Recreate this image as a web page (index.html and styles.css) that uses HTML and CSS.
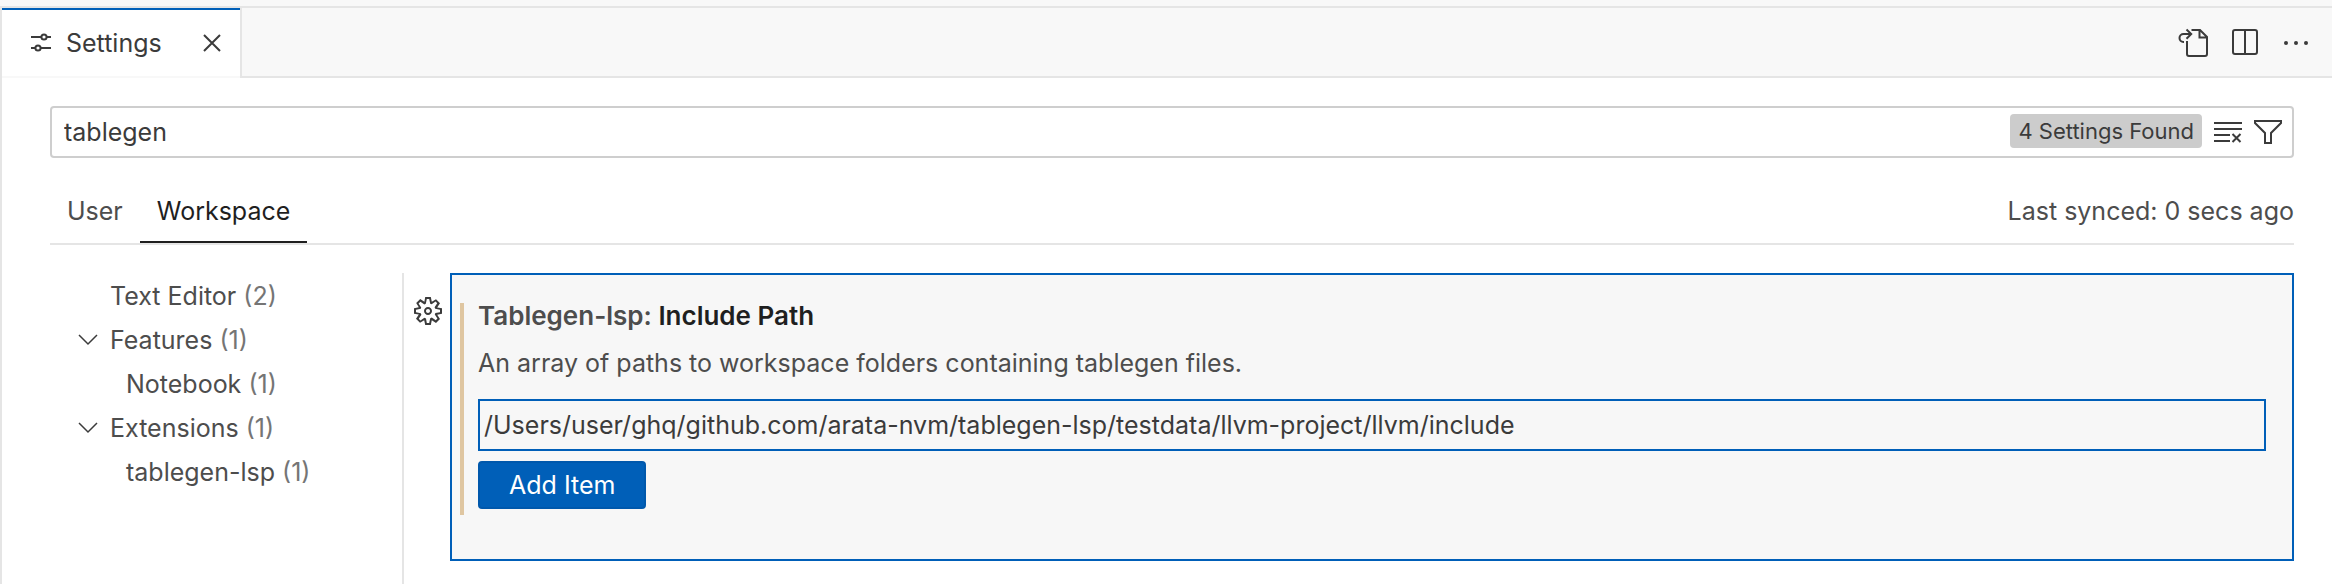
FILE: index.html
```html
<!DOCTYPE html>
<html lang="en">
<head>
<meta charset="utf-8">
<title>Settings</title>
<link rel="stylesheet" href="styles.css">
</head>
<body>
<div class="editor">
  <header class="tabbar">
    <div class="tab">
      <svg class="icon icon-sliders" viewBox="0 0 20 20"><path d="M0 4h10M16 4h4M0 15h4M10 15h10"/><circle cx="13" cy="4" r="2.6"/><circle cx="7" cy="15" r="2.6"/></svg>
      <span class="tab-label">Settings</span>
      <button class="icon-button tab-close" type="button" aria-label="Close"><svg class="icon icon-close" viewBox="0 0 18 18"><path d="M1 1l16 16M17 1L1 17"/></svg></button>
    </div>
    <div class="actions">
      <button class="icon-button" type="button" aria-label="Open Settings (JSON)"><svg class="icon" viewBox="0 0 32 32"><path d="M11 14v13q0 2 2 2h16q2 0 2-2V10l-7-7h-8.500M23.500 3v7.500H31"/><path d="M8 15H7.500a4 4 0 0 1 0-8H15M10.500 2.500L15.200 7l-4.700 4.700"/></svg></button>
      <button class="icon-button" type="button" aria-label="Split Editor"><svg class="icon" viewBox="0 0 32 32"><rect x="5" y="3" width="24" height="24" rx="2"/><path d="M17 3v24"/></svg></button>
      <button class="icon-button" type="button" aria-label="More Actions"><svg class="icon icon-solid" viewBox="0 0 32 32"><circle cx="6" cy="16" r="2"/><circle cx="16" cy="16" r="2"/><circle cx="26" cy="16" r="2"/></svg></button>
    </div>
  </header>
  <main class="settings">
    <div class="search">
      <input class="search-input" type="text" value="tablegen" aria-label="Search settings">
      <span class="badge">4 Settings Found</span>
      <div class="search-actions">
        <button class="icon-button" type="button" aria-label="Clear Search Results"><svg class="icon" viewBox="0 0 32 32"><path d="M2 7h28M2 13h28M2 19h16M2 25h16M20.500 18l8 8M28.500 18l-8 8"/></svg></button>
        <button class="icon-button" type="button" aria-label="Filter Settings"><svg class="icon" viewBox="0 0 32 32"><path d="M3 5h26v2L19 17v10h-6V17L3 7z"/></svg></button>
      </div>
    </div>
    <div class="scopes">
      <button class="scope" type="button">User</button>
      <button class="scope scope-active" type="button">Workspace</button>
      <span class="sync">Last synced: 0 secs ago</span>
    </div>
    <div class="body">
      <nav class="toc" aria-label="Settings groups">
        <div class="toc-row"><span>Text Editor <span class="count">(2)</span></span></div>
        <div class="toc-row"><svg class="icon icon-chevron" viewBox="0 0 20 12"><path d="M1 1l9 9 9-9"/></svg><span>Features <span class="count">(1)</span></span></div>
        <div class="toc-row toc-child"><span>Notebook <span class="count">(1)</span></span></div>
        <div class="toc-row"><svg class="icon icon-chevron" viewBox="0 0 20 12"><path d="M1 1l9 9 9-9"/></svg><span>Extensions <span class="count">(1)</span></span></div>
        <div class="toc-row toc-child"><span>tablegen-lsp <span class="count">(1)</span></span></div>
      </nav>
      <div class="gutter">
        <button class="icon-button" type="button" aria-label="More setting actions"><svg class="icon icon-solid" viewBox="0 0 16 16"><path fill-rule="evenodd" d="M9.1 4.4L8.6 2H7.4l-.5 2.4-.7.3-2-1.3-.9.8 1.3 2-.2.7-2.4.5v1.2l2.4.5.3.8-1.3 2 .8.8 2-1.3.8.3.4 2.3h1.2l.5-2.4.8-.3 2 1.3.8-.8-1.3-2 .3-.8 2.3-.4V7.4l-2.4-.5-.3-.8 1.3-2-.8-.8-2 1.3-.7-.2zM9.400 1l.5 2.400L12 2.100l2 2-1.400 2.100 2.400.4v2.800l-2.400.5L14 12l-2 2-2.100-1.400-.5 2.400H6.600l-.5-2.400L4 13.900l-2-2 1.400-2.100L1 9.400V6.600l2.400-.5L2.100 4l2-2 2.100 1.400.4-2.400h2.800zm.6 7c0 1.100-.9 2-2 2s-2-.9-2-2 .9-2 2-2 2 .9 2 2zM8 9c.6 0 1-.4 1-1s-.4-1-1-1-1 .4-1 1 .4 1 1 1z"/></svg></button>
      </div>
      <section class="setting">
        <div class="setting-content">
          <h2 class="setting-title"><span class="setting-group">Tablegen-lsp:</span> Include Path</h2>
          <p class="setting-text">An array of paths to workspace folders containing tablegen files.</p>
          <ul class="paths">
            <li class="path">/Users/user/ghq/github.com/arata-nvm/tablegen-lsp/testdata/llvm-project/llvm/include</li>
          </ul>
          <button class="add" type="button">Add Item</button>
        </div>
      </section>
    </div>
  </main>
</div>
</body>
</html>
```
FILE: styles.css
```css
* {
  box-sizing: border-box;
}

body {
  margin: 0;
  padding-top: 6px;
  background: #f8f8f8;
  color: #3b3b3b;
  font-family: Inter, "Liberation Sans", sans-serif;
  font-size: 25px;
  line-height: 32px;
}

button,
input {
  margin: 0;
  padding: 0;
  border: 0;
  background: none;
  color: inherit;
  font: inherit;
}

.editor {
  display: flex;
  flex-direction: column;
  min-height: calc(100vh - 6px);
  border-top: 2px solid #e5e5e5;
  border-left: 2px solid #e5e5e5;
  background: #fff;
}

.icon {
  display: block;
  width: 32px;
  height: 32px;
  fill: none;
  stroke: #3b3b3b;
  stroke-width: 2;
}

.icon-solid {
  fill: #3b3b3b;
  stroke: none;
}

.icon-button {
  display: block;
  flex: none;
}

.tabbar {
  display: flex;
  justify-content: space-between;
  height: 70px;
  background: #f8f8f8;
  box-shadow: inset 0 -2px #e5e5e5;
}

.tab {
  display: flex;
  align-items: center;
  padding: 0 19px 0 29px;
  border-top: 2px solid #005fb8;
  border-bottom: 2px solid #f8f8f8;
  background: #fff;
  box-shadow: 2px 0 #e5e5e5;
}

.icon-sliders {
  width: 20px;
  height: 20px;
}

.tab-label {
  margin: 0 41px 0 15px;
}

.icon-close {
  width: 18px;
  height: 18px;
}

.actions {
  display: flex;
  align-items: center;
  gap: 20px;
  padding-right: 20px;
}

.settings {
  display: flex;
  flex: 1;
  flex-direction: column;
  padding: 28px 38px 0 48px;
}

.search {
  display: flex;
  align-items: center;
  height: 52px;
  padding: 0 8px 0 12px;
  border: 2px solid #cecece;
  border-radius: 4px;
}

.search-input {
  flex: 1;
  min-width: 0;
  outline: 0;
}

.badge {
  margin-bottom: 2px;
  padding: 0 8px;
  border-radius: 4px;
  background: #ccc;
  font-size: 22px;
  line-height: 34px;
}

.search-actions {
  display: flex;
  gap: 8px;
  margin-left: 10px;
}

.scopes {
  display: flex;
  height: 87px;
  padding-top: 21px;
  border-bottom: 2px solid #e5e5e5;
}

.scope {
  padding: 0 17px;
  border-top: 2px solid transparent;
  border-bottom: 2px solid transparent;
  color: #4d4d4d;
}

.scope-active {
  border-bottom-color: #1f1f1f;
  color: #1f1f1f;
}

.sync {
  align-self: center;
  margin-left: auto;
  color: #4d4d4d;
}

.body {
  display: flex;
  flex: 1;
  margin-top: 28px;
}

.toc {
  flex: none;
  width: 354px;
  padding-top: 1px;
  border-right: 2px solid #e5e5e5;
  color: #4d4d4d;
}

.toc-row {
  display: grid;
  grid-template-columns: 20px 1fr;
  align-items: center;
  column-gap: 12px;
  height: 44px;
  padding-left: 28px;
}

.toc-row > span {
  grid-column: 2;
}

.toc-child {
  padding-left: 44px;
}

.count {
  color: #757575;
}

.icon-chevron {
  width: 20px;
  height: 12px;
  stroke-width: 1.5;
}

.gutter {
  flex: none;
  width: 46px;
  padding: 22px 0 0 8px;
}

.setting {
  flex: 1;
  align-self: flex-start;
  min-width: 0;
  padding: 28px 26px 44px 8px;
  border: 2px solid #005fb8;
  background: #f7f7f7;
}

.setting-content {
  padding: 0 0 6px 14px;
  border-left: 4px solid #dfc6a1;
}

.setting-title {
  margin: 0 0 16px;
  color: #1f1f1f;
  font-size: 26px;
  font-weight: 600;
  line-height: 26px;
}

.setting-group {
  color: #4d4d4d;
}

.setting-text {
  margin: 0 0 18px;
  color: #4d4d4d;
  line-height: 36px;
}

.paths {
  margin: 0 0 10px;
  padding: 0;
  list-style: none;
}

.path {
  padding: 8px 4px;
  border: 2px solid #005fb8;
}

.add {
  display: block;
  padding: 6px 29px;
  border: 2px solid #0058ac;
  border-radius: 4px;
  background: #005fb8;
  color: #fff;
}
```
